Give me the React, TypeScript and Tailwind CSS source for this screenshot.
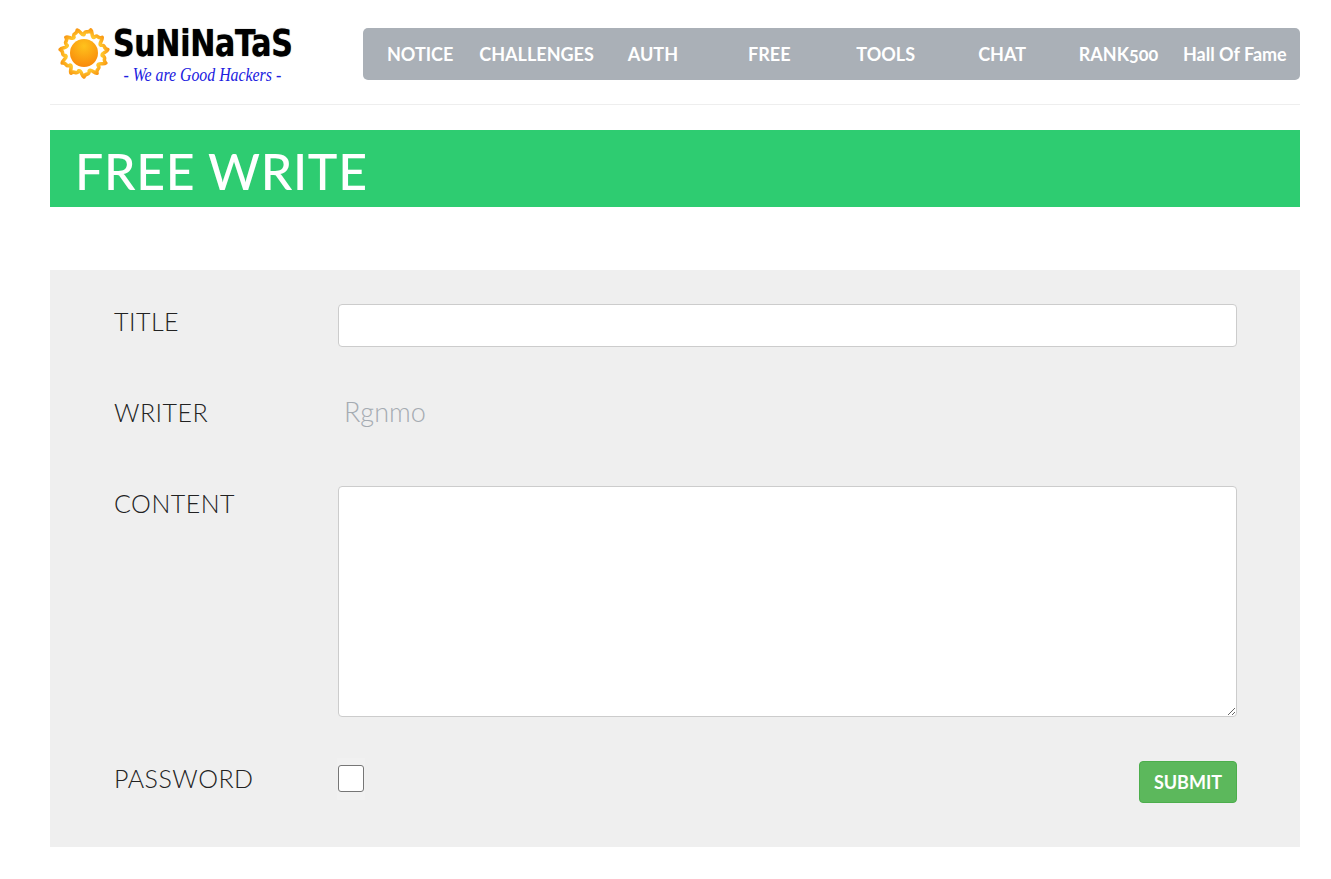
const menus = ["NOTICE", "CHALLENGES", "AUTH", "FREE", "TOOLS", "CHAT", "RANK500", "Hall Of Fame"];

// wavy band of flames around the sun
const flames = Array.from({ length: 11 }, (_, i) => {
  const step = (Math.PI * 2) / 11;
  const a = i * step - Math.PI / 2;
  const pt = (r: number, t: number) => `${(26 + r * Math.cos(t)).toFixed(1)} ${(26 + r * Math.sin(t)).toFixed(1)}`;
  return `${i === 0 ? `M${pt(18.5, a)}` : ""} C${pt(24, a + step * 0.1)} ${pt(19, a + step * 0.35)} ${pt(24, a + step * 0.5)} C${pt(23, a + step * 0.7)} ${pt(17, a + step * 0.75)} ${pt(18.5, a + step)}`;
}).join(" ");

function SunLogo() {
  return (
    <svg width="52" height="52" viewBox="0 0 52 52" className="shrink-0">
      <defs>
        <radialGradient id="disc" cx="50%" cy="25%" r="80%">
          <stop offset="0%" stopColor="#ffc21c" />
          <stop offset="100%" stopColor="#f9860a" />
        </radialGradient>
        <radialGradient id="flame" gradientUnits="userSpaceOnUse" cx="26" cy="26" r="26">
          <stop offset="70%" stopColor="#ffc52c" />
          <stop offset="100%" stopColor="#f8920f" />
        </radialGradient>
      </defs>
      <path d={flames + " Z"} fill="none" stroke="url(#flame)" strokeWidth="3.6" strokeLinejoin="round" />
      <circle cx="26" cy="26" r="14" fill="url(#disc)" />
    </svg>
  );
}

function Row({
  label,
  className,
  labelClass = "",
  children,
}: {
  label: string;
  className: string;
  labelClass?: string;
  children: React.ReactNode;
}) {
  return (
    <div className={`flex ${className}`}>
      <div className={`w-[224px] shrink-0 text-[25px] leading-[34px] font-light tracking-[0.5px] text-[#222222] ${labelClass}`}>
        {label}
      </div>
      {children}
    </div>
  );
}

export default function App() {
  return (
    <div className="min-h-[879px] bg-white pr-[31px] pl-[50px] font-['Lato','Open_Sans',sans-serif]">
      <header className="flex h-[105px] border-b border-[#eeeeee]">
        <div className="flex w-[313px] shrink-0 pt-[27px] pl-[8px]">
          <SunLogo />
          <div className="mt-[-3px] ml-[3px]">
            <div className="h-[38px] origin-left scale-x-[0.79] font-['DejaVu_Sans',sans-serif] text-[38px] leading-[38px] font-bold tracking-[-0.4px] whitespace-nowrap text-black [text-shadow:0_0_1px_#333]">
              SuNiNaTaS
            </div>
            <div className="mt-[2px] origin-left scale-x-[0.88] pl-[12px] font-['Liberation_Serif',serif] text-[18px] leading-[22px] whitespace-nowrap text-[#2020e0] italic">
              - We are Good Hackers -
            </div>
          </div>
        </div>
        <nav className="mt-[28px] h-[52px] flex-1 rounded-[5px] bg-[#aab0b7]">
          <ul className="ml-[-1px] grid h-full w-[931px] grid-cols-8 items-center">
            {menus.map((m) => (
              <li key={m} className="text-center text-[18px] leading-[52px] font-bold whitespace-nowrap text-white oldstyle-nums">
                {m}
              </li>
            ))}
          </ul>
        </nav>
      </header>

      <h1 className="mt-[25px] h-[77px] bg-[#2ecc71] pl-[25px] text-[50px] leading-[82px] font-medium tracking-[0.7px] text-white">
        FREE WRITE
      </h1>

      <form className="mt-[63px] h-[577px] bg-[#efefef] pt-[34px] pr-[63px] pl-[64px]">
        <Row label="TITLE" className="h-[43px]">
          <input className="h-[43px] flex-1 rounded-[4px] border border-[#cccccc] bg-white" />
        </Row>
        <Row label="WRITER" className="mt-[48px] h-[43px]">
          <div className="pl-[6px] text-[27px] leading-[34px] font-light text-[#a5abb2]">Rgnmo</div>
        </Row>
        <Row label="CONTENT" className="mt-[48px] h-[231px]">
          <textarea className="h-[231px] flex-1 rounded-[4px] border border-[#cccccc] bg-white" />
        </Row>
        <Row label="PASSWORD" labelClass="pt-[3px]" className="mt-[41px] h-[46px]">
          <div className="flex flex-1 justify-between">
            <div className="ml-[-1px] h-[42px] w-[28px] bg-[#f1f1f1] pt-[7px]">
              <input
                type="checkbox"
                className="ml-[1px] block h-[27px] w-[26px] appearance-none rounded-[3px] border border-[#767676] bg-white"
              />
            </div>
            <button
              type="button"
              className="mt-[3px] h-[42px] w-[98px] rounded-[4px] border border-[#4cae4c] bg-[#5cb85c] text-[18px] font-bold text-white"
            >
              SUBMIT
            </button>
          </div>
        </Row>
      </form>
    </div>
  );
}
